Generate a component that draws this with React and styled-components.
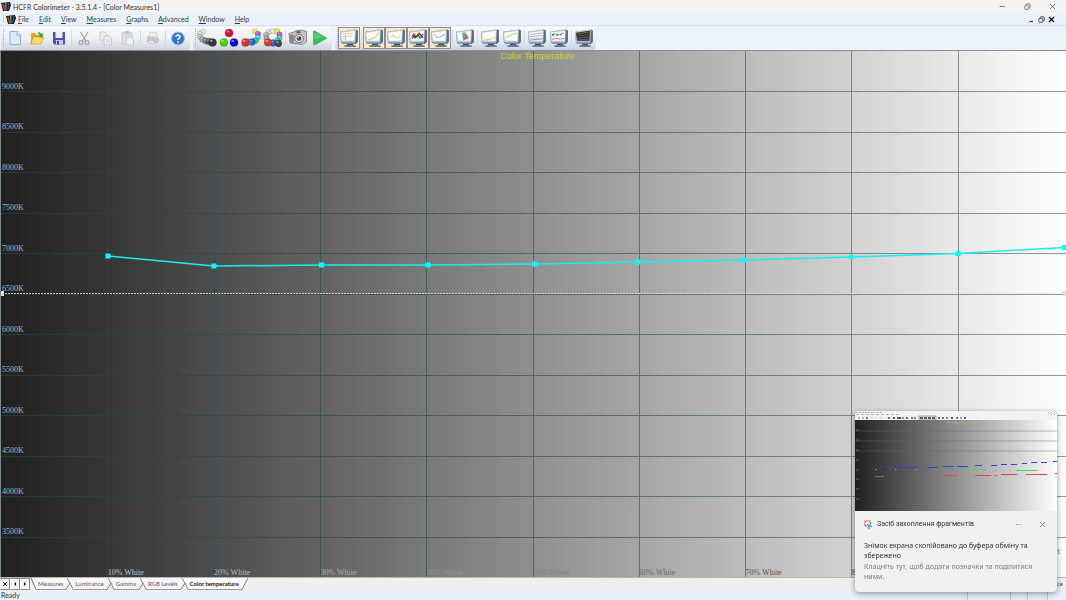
import React from "react";
import styled, { createGlobalStyle, css } from "styled-components";

const GlobalStyle = createGlobalStyle`
  *, *::before, *::after { box-sizing: border-box; }
  body { margin: 0; background: #edf2fa; }
  button { font: inherit; color: inherit; border: 0; padding: 0; background: none; }
`;

const Window = styled.div`
  display: flex;
  flex-direction: column;
  min-height: 100vh;
  font-family: Lato, "Noto Sans", sans-serif;
  font-size: 7px;
  color: #444;
`;

const TitleBar = styled.header`
  display: flex;
  align-items: center;
  height: 13px;
  padding: 0 10px 0 1px;
  gap: 2px;
  background: #f3f3f3;
`;

const Title = styled.h1`
  margin: 0;
  flex: 1;
  font-size: 7px;
  font-weight: 400;
  line-height: 12px;
  color: #333;
`;

const WindowButtons = styled.div`
  display: flex;
  align-items: center;
  gap: ${(p) => (p.$compact ? "3px" : "18px")};
`;

const GlyphButton = styled.button`
  display: flex;
  svg { display: block; }
`;

const MenuBar = styled.nav`
  display: flex;
  align-items: center;
  height: 13px;
  padding: 0 11px 0 3px;
  gap: 2px;
  background: #eaf1fa;
  border-bottom: 1px solid #dddfe3;
`;

const MenuList = styled.div`
  display: flex;
  flex: 1;
  gap: 10px;
`;

const MenuItem = styled.button`
  line-height: 12px;
  color: #333b44;
  &::first-letter { text-decoration: underline; }
`;

const Grip = styled.span`
  width: 1px;
  height: ${(p) => p.$height}px;
  flex: none;
  background: repeating-linear-gradient(#9cabc2 0 1px, transparent 1px 2px);
`;

const ToolbarBand = styled.div`
  display: flex;
  height: 25px;
  padding: 1px 0 0 1px;
  gap: 3px;
  background: #edf3fb;
  border-bottom: 1px solid #8e8e90;
`;

const Toolbar = styled.div`
  display: flex;
  align-items: center;
  padding: 0 1px 1px 2px;
  border-radius: 2px 3px 3px 2px;
  background: linear-gradient(#f9fafc 0%, #edf0f5 50%, #cdd4df 100%);
`;

const ToolButton = styled.button`
  display: grid;
  place-items: center;
  width: 22px;
  height: 22px;
  svg { display: block; }
  ${(p) =>
    p.$active &&
    css`
      background: #fce8c2;
      border: 1px solid #8e8aa2;
    `}
`;

const Divider = styled.span`
  width: 1px;
  height: 16px;
  margin: 0 1px;
  background: #d3d9e2;
`;

const ChartArea = styled.main`
  position: relative;
  flex: 1;
  min-height: 400px;
  overflow: hidden;
  background: linear-gradient(90deg, #202020, #ffffff);
  border-left: 1px solid #7d8a8a;
`;

const Plot = styled.svg`
  position: absolute;
  inset: 0;
  width: 100%;
  height: 100%;
`;

const ChartTitle = styled.h2`
  position: absolute;
  top: 0;
  left: 0;
  right: 0;
  margin: 0;
  padding-left: 8px;
  text-align: center;
  font: 400 9px/11px "Liberation Sans", sans-serif;
  color: #d3d513;
`;

const AxisLabel = styled.span`
  position: absolute;
  font: 8px/10px "Liberation Serif", serif;
  color: ${(p) => p.$tone};
  white-space: nowrap;
`;

const YLabel = styled(AxisLabel)`
  left: 1px;
  transform: translateY(-100%);
`;

const XLabel = styled(AxisLabel)`
  bottom: -1px;
`;

const EdgeNote = styled.span`
  position: absolute;
  right: 6px;
  bottom: 20px;
  font-size: 8px;
  line-height: 12px;
  color: #8d7a68;
`;

const TabStrip = styled.div`
  display: flex;
  align-items: stretch;
  height: 13px;
  border-top: 1px solid #b6b6b6;
  background: #f0efef;
  font-size: 6px;
  line-height: 12px;
  padding-right: 3px;
`;

const NavButton = styled.button`
  display: grid;
  place-items: center;
  width: 10px;
  border: 1px solid #8a8a8a;
  border-left-color: #fff;
  background: #f4f4f4;
`;

const Tab = styled.button`
  padding: 0 2px;
  color: ${(p) => (p.$active ? "#111" : "#5f555b")};
  font-weight: ${(p) => (p.$active ? 700 : 400)};
  background: ${(p) => (p.$active ? "#fff" : "#f7f5f6")};
  border-bottom: 1px solid #9a9a9a;
  white-space: nowrap;
`;

const TabEdge = styled.svg`
  flex: none;
  display: block;
`;

const StripNote = styled.span`
  margin-left: auto;
  color: #444;
`;

const StatusBar = styled.footer`
  display: flex;
  height: 10px;
  padding-left: 1px;
  line-height: 10px;
  background: #e9f0fa;
  color: #333;
`;

const StatusText = styled.span`
  flex: 1;
`;

const StatusPane = styled.span`
  width: ${(p) => p.$width}px;
  border-left: 1px solid #bccbe0;
`;

const Toast = styled.aside`
  position: fixed;
  right: 9px;
  bottom: 8px;
  width: 202px;
  border-radius: 4px;
  overflow: hidden;
  background: #f0f1f0;
  box-shadow: 0 0 1px #8a8a8a, 0 2px 6px rgba(0, 0, 0, 0.35);
  color: #333;
`;

const Thumbnail = styled.svg`
  display: block;
  width: 100%;
`;

const ToastHeader = styled.div`
  display: flex;
  align-items: center;
  gap: 4px;
  padding: 7px 11px 0 9px;
  font-family: Roboto, "Noto Sans", sans-serif;
  line-height: 12px;
`;

const ToastApp = styled.span`
  flex: 1;
`;

const ToastActions = styled.div`
  display: flex;
  align-items: center;
  gap: 16px;
`;

const ToastBody = styled.div`
  display: grid;
  gap: 1px;
  padding: 11px 9px 10px;
`;

const ToastText = styled.p`
  margin: 0;
  font-family: "Noto Sans", sans-serif;
  font-size: 7px;
  line-height: 10px;
  color: ${(p) => (p.$muted ? "#7b7b7b" : "#333")};
`;

const AppLogo = () => (
  <svg width="10" height="9" viewBox="0 0 10 9" aria-hidden="true">
    <path d="M0 1 9 0 10 3 8 9 2 9Z" fill="#15171a" />
    <path d="M1 2 3 1.500 4.500 8.500 3 8.500Z" fill="#df2630" />
    <path d="M4 1 5.500 1 5.500 8.500 4.500 8.500Z" fill="#2dd23a" />
    <path d="M7 1 8.500 1 7.500 8.500 6.500 8.500Z" fill="#3043df" />
  </svg>
);

const CloseIcon = ({ size = 7, color = "#555", weight = 0.8 }) => (
  <svg width={size} height={size} viewBox="0 0 7 7" aria-hidden="true">
    <path d="M1 1 6 6M6 1 1 6" stroke={color} strokeWidth={weight} fill="none" />
  </svg>
);
const MinIcon = ({ low, color = "#666" }) => (
  <svg width="7" height="7" viewBox="0 0 7 7" aria-hidden="true">
    <path d={low ? "M1.500 5.500H5" : "M0.500 3.500H6"} stroke={color} strokeWidth={low ? 1.2 : 0.8} />
  </svg>
);
const RestoreIcon = ({ color = "#666" }) => (
  <svg width="7" height="7" viewBox="0 0 7 7" fill="none" stroke={color} strokeWidth="0.8" aria-hidden="true">
    <path d="M2.300 2.200V1.500Q2.300 .8 3 .8H5.500Q6.200 .8 6.200 1.500V4Q6.200 4.700 5.500 4.700H4.900" />
    <rect x="0.800" y="2.300" width="4" height="4" rx="0.600" />
  </svg>
);

const Icon = ({ children, w = 20, h = 20 }) => (
  <svg width={w} height={h} viewBox={`0 0 ${w} ${h}`} aria-hidden="true">
    {children}
  </svg>
);

const Balls = ({ items }) => (
  <Icon>
    {items.map(([x, y, r, fill], i) => (
      <g key={i}>
        <circle cx={x} cy={y} r={r} fill={fill} stroke="rgba(0,0,0,.35)" strokeWidth="0.400" />
        <ellipse cx={x - r * 0.3} cy={y - r * 0.4} rx={r * 0.4} ry={r * 0.25} fill="#fff" opacity="0.450" />
      </g>
    ))}
  </Icon>
);

const NewIcon = () => (
  <Icon>
    <path d="M5 3.500H12L15.500 7V16.500H5Z" fill="#d9e8fd" stroke="#8daede" />
    <path d="M12 3.500V7H15.500" fill="#fff" stroke="#8daede" />
  </Icon>
);
const OpenIcon = () => (
  <Icon>
    <path d="M4 5H8L9 6.500H14V15H4Z" fill="#e2a927" />
    <path d="M3.500 16 6.500 9H17L13.500 16Z" fill="#ffdf61" stroke="#bd8617" strokeWidth="0.600" />
    <path d="M10 5Q13 3 14.500 6L16.500 5.500 15 10 11.500 7.500 13 7Q12 5 10 5Z" fill="#28a334" />
  </Icon>
);
const SaveIcon = () => (
  <Icon>
    <path d="M4 4H16V16.500H5.500L4 15Z" fill="#5352b4" />
    <rect x="6.500" y="4" width="7" height="6" fill="#edf0fb" />
    <rect x="7" y="12" width="7" height="4.500" fill="#c4c8e2" />
    <rect x="8" y="13" width="2" height="3.500" fill="#4241a0" />
  </Icon>
);
const CutIcon = () => (
  <Icon>
    <g fill="none" stroke="#a4a7ab" strokeWidth="1.300">
      <path d="M6.500 4 12 13M14 4 8.500 13" />
      <circle cx="7" cy="14.500" r="1.900" />
      <circle cx="13" cy="14.500" r="1.900" />
    </g>
  </Icon>
);
const CopyIcon = () => (
  <Icon>
    <g fill="#eceef0" stroke="#c1c4c8" strokeWidth="0.900">
      <path d="M4 4H9L11 6V12H4Z" />
      <path d="M8 8H13L15.500 10.500V17H8Z" />
      <path d="M10 12H14M10 14H14" />
    </g>
  </Icon>
);
const PasteIcon = () => (
  <Icon>
    <rect x="4" y="4.500" width="10" height="12" rx="1" fill="#dcdee0" stroke="#c8cbcf" />
    <rect x="7" y="3" width="4" height="3" fill="#c3c6ca" />
    <path d="M8.500 9H13L15.500 11.500V17H8.500Z" fill="#f0f1f2" stroke="#c6c9cd" />
  </Icon>
);
const PrintIcon = () => (
  <Icon>
    <path d="M7.500 4 14 5 13 10 6 9Z" fill="#eff0f1" stroke="#c3c6ca" strokeWidth="0.800" />
    <path d="M4 9 6 8 15 9.500 16 11V14L13 16 4 13.500Z" fill="#c3c6ca" />
    <path d="M6 12 12 13.500 10 16 5 14Z" fill="#eff0f1" stroke="#abaeb2" strokeWidth="0.600" />
  </Icon>
);
const HelpIcon = () => (
  <Icon>
    <circle cx="10" cy="10.500" r="6.500" fill="#3972cc" stroke="#a5bfe8" />
    <path d="M8 8.800Q8 7 10 7T12 8.800Q12 10 10.100 11V12M10.100 13.200V14.700" fill="none" stroke="#fff" strokeWidth="1.500" />
  </Icon>
);
const CameraIcon = () => (
  <Icon>
    <path d="M1 5.500 6 4 8 2.500 14 2 18.500 3.500V14L14 16.500 2 15Z" fill="#c4c4c2" stroke="#6a6a6a" strokeWidth="0.700" />
    <path d="M2 6.500 6 7V15L2 14.500Z" fill="#8a8a89" />
    <circle cx="11" cy="10.500" r="4.300" fill="#dedede" stroke="#5a5a5a" strokeWidth="0.800" />
    <circle cx="11" cy="10.500" r="2.300" fill="#354656" />
    <circle cx="10.300" cy="9.800" r="0.800" fill="#c7dced" />
    <rect x="8.500" y="3.300" width="4" height="1.500" fill="#454545" />
  </Icon>
);
const PlayIcon = () => (
  <Icon>
    <path d="M3.500 3.500Q3.500 2.500 4.500 3L16 9.500Q17 10 16 10.700L4.500 17Q3.500 17.500 3.500 16.500Z" fill="#35bd55" stroke="#36a552" strokeWidth="0.600" />
    <path d="M4.500 4.500 13.500 9.700 4.500 11Z" fill="#5fd076" />
  </Icon>
);

const Monitor = ({ dark, children }) => (
  <Icon>
    <path d="M1 3.800 16.800 1.500 18.800 2.500V14L16.300 16.200 3 15.800 1.800 14.800Z" fill="#7c94aa" />
    <path d="M16.800 1.500 18.800 2.500V14L16.300 16.200 16 14.500Z" fill="#566f88" />
    <path d="M1 3.800 16.800 1.500 16.200 14.300 2.200 14.300Z" fill="#b4c4d3" />
    <path d="M2 4.800 15.900 2.800 15.400 12.800 3 12.800Z" fill={dark ? "#262b2a" : "#fdfdfb"} />
    <path d="M8 15.800H14V17.500H8Z" fill="#3f4d5b" />
    <path d="M4.500 17.800 7.500 17H15L17.500 18.200 16 19H6Z" fill="#6d7d8f" />
    <g fill="none" strokeWidth="0.900">{children}</g>
  </Icon>
);

const GREY_BALLS = [[6,3.500,2.600,"#e4e4e4"],[3,5.500,2.700,"#d5d5d5"],[3,9,2.700,"#bdbdbd"],[5.500,11.500,2.900,"#a0a0a0"],[9,13,3.200,"#7d7d7d"],[12,13.500,3.300,"#5a5a5a"],[15.500,14.500,4,"#383838"]];
const RGB_BALLS = [[10,5,4,"#e00d35"],[5,14.500,4,"#48d600"],[15,14.500,4,"#1208d8"]];
const COLOR_BALLS = [[14,3.500,2.600,"#f1e23c"],[17,6,2.700,"#c34ae0"],[17,9.500,2.700,"#45d8e4"],[14.500,12.500,3.100,"#3ac867"],[11,14,3.400,"#245fd9"],[7.500,14,3.100,"#3a9be0"],[4.500,14.500,4,"#df2f25"]];
const RING_BALLS = [[6,4,2.800,"#d2d2d2"],[10,3,2.600,"#e5e5e5"],[14,3.500,2.800,"#e8e23b"],[16.500,6.500,2.700,"#c44cdb"],[3,7,2.700,"#b0b0b0"],[3.500,10.500,2.800,"#999"],[16.500,10,2.800,"#37cfd7"],[14.500,13,3,"#3ac555"],[10,15,3.400,"#2761c9"],[5,14.500,3.800,"#df3a2a"],[15.500,15.500,3.400,"#484848"]];

const Tool = ({ label, active, children }) => (
  <ToolButton type="button" aria-label={label} $active={active}>{children}</ToolButton>
);

const MENUS = ["File", "Edit", "View", "Measures", "Graphs", "Advanced", "Window", "Help"];
const TABS = ["Measures", "Luminance", "Gamma", "RGB Levels", "Color temperature"];

const PLOT_W = 1065;
const PLOT_H = 526;
const KELVIN = [9000, 8500, 8000, 7500, 7000, 6500, 6000, 5500, 5000, 4500, 4000, 3500];
const kelvinY = (i) => 40.5 + i * 40.5;
const levelX = (i) => 0.5 + i * 106.3;
const LEVELS = [10, 20, 30, 40, 50, 60, 70, 80, 90];
const LEVEL_TONES = ["#c4c4c4", "#b9b9b9", "#acacac", "#949494", "#808080", "#686868", "#555", "#444"];
const POINTS = [[107,205],[213,215],[320.500,214],[427,214],[534,213],[637,211],[743,209],[850.500,206],[957,202.500],[1063.500,196.500]];

function TemperatureChart() {
  return (
    <ChartArea>
      <Plot viewBox={`0 0 ${PLOT_W} ${PLOT_H}`} preserveAspectRatio="none" role="img" aria-label="Color temperature by grey level">
        <defs>
          <linearGradient id="gridTone" gradientUnits="userSpaceOnUse" x1="0" x2={PLOT_W} y1="0" y2="0">
            <stop offset="0" stopColor="#1d3c3c" />
            <stop offset="0.5" stopColor="#4b6562" />
            <stop offset="1" stopColor="#949b9b" />
          </linearGradient>
        </defs>
        {KELVIN.map((k, i) => (
          <rect key={k} x="0" y={Math.round(kelvinY(i) - 0.500)} width={PLOT_W} height="1" fill="url(#gridTone)" />
        ))}
        {LEVELS.map((level, i) => (
          <rect key={level} x={Math.round(levelX(i + 1) - 0.500)} y="0" width="1" height={PLOT_H} fill="url(#gridTone)" />
        ))}
        <path d={`M1 242.500H${PLOT_W}`} stroke="#e4e4e4" strokeOpacity="0.850" strokeWidth="1" strokeDasharray="2 1" />
        <rect x="0" y="240" width="3" height="5" fill="#e2e2e2" />
        <rect x="1062" y="240" width="3" height="5" fill="#dedede" />
        <polyline points={POINTS.map((p) => p.join(",")).join(" ")} fill="none" stroke="#18eef0" strokeWidth="1.500" />
        {POINTS.map(([x, y]) => (
          <rect key={x} x={x - 2.500} y={y - 2.500} width="5" height="5" fill="#00ffff" />
        ))}
      </Plot>
      <ChartTitle>Color Temperature</ChartTitle>
      {KELVIN.map((k, i) => (
        <YLabel key={k} $tone="#b4b4b4" style={{ top: `${(kelvinY(i) / PLOT_H) * 100}%` }}>{k}K</YLabel>
      ))}
      {LEVEL_TONES.map((tone, i) => (
        <XLabel key={i} $tone={tone} style={{ left: `${(levelX(i + 1) / PLOT_W) * 100}%` }}>{LEVELS[i]}% White</XLabel>
      ))}
      <EdgeNote>t</EdgeNote>
    </ChartArea>
  );
}

const THUMB_ICONS = [[3,"#9ab6e0"],[7,"#e8b629"],[11,"#6a6ac0"],[16,"#ddd"],[20,"#ddd"],[25,"#ddd"],[33,"#4380d3"],[38,"#555"],[42,"#c2353f"],[44,"#3547c9"],[47,"#5eae64"],[51,"#7b4fae"],[56,"#777"],[59,"#35bd55"],[83,"#54697c"],[87,"#7183a1"],[91,"#71899c"],[96,"#53685c"],[101,"#65798f"],[105,"#93a3b3"],[109,"#8b4a98"]];

function SnipThumbnail() {
  return (
    <Thumbnail viewBox="0 0 202 100" role="img" aria-label="Screenshot preview">
      <defs>
        <linearGradient id="thumbRamp">
          <stop offset="0" stopColor="#202020" />
          <stop offset="1" stopColor="#fff" />
        </linearGradient>
      </defs>
      <rect width="202" height="10" fill="#f1f3f7" />
      <path d="M1 1.500H27" stroke="#9b9b9b" strokeWidth="0.700" strokeDasharray="2 1" />
      <path d="M1 3.500H46" stroke="#9aa6b3" strokeWidth="0.800" strokeDasharray="3 2" />
      <path d="M193 1.500H201M196 3.500H201" stroke="#999" strokeWidth="0.700" strokeDasharray="1 2" />
      <rect x="64" y="5" width="17" height="4" fill="#f6dfb5" stroke="#55529a" strokeWidth="0.500" />
      {[65, 69, 73, 77].map((x) => <rect key={x} x={x} y="6" width="3" height="2" fill="#4c6178" />)}
      {THUMB_ICONS.map(([x, c]) => <rect key={x} x={x} y="6" width="2" height="2" fill={c} />)}
      <rect y="9" width="202" height="91" fill="url(#thumbRamp)" />
      <path d="M0 20H202M0 30H202M0 40H202" stroke="#56706c" strokeOpacity="0.450" />
      <path d="M92 11.500H114" stroke="#b9ba32" strokeWidth="0.800" strokeDasharray="3 1" />
      <path d="M1 19H4M1 29H4M1 39H4M1 49H4M1 59H4M1 68H4M1 78H4M1 88H4" stroke="#718080" strokeWidth="0.800" />
      <g fill="none" strokeWidth="1">
        <path d="M20 54.500H22M25 55.500H27M30 55.500H32M35 56.500H62M72 56.500H83M88 55.500H99M102 55.500H113M120 54.500H127M136 54.500H142M146 53.500H152M156 53.500H162M167 52.500H172M176 51.500H182M186 51.500H192M198 50.500H202" stroke="#3b3bd5" />
        <path d="M20 58.500H21.500M40 58.500H41.500M60 58.500H61.500M80 58.500H82M100 58.500H102M111 58.500H131M140 59.500H142M161 59.500H182" stroke="#45dc45" />
        <path d="M20 65.500H29M40 64.500H41.500M60 65.500H61.500M80 65.500H82M88 64.500H102M120 64.500H136M140 64.500H142M146 63.500H162M171 63.500H192M200 62.500H202" stroke="#e84343" />
      </g>
    </Thumbnail>
  );
}

const NAV = [
  ["Close", "M1 1 5 5M5 1 1 5"],
  ["Previous", "M4 1 2 3 4 5Z"],
  ["Next", "M2 1 4 3 2 5Z"],
];

export default function App() {
  return (
    <Window>
      <GlobalStyle />
      <TitleBar>
        <AppLogo />
        <Title>HCFR Colorimeter - 3.5.1.4 - [Color Measures1]</Title>
        <WindowButtons>
          <GlyphButton type="button" aria-label="Minimize"><MinIcon /></GlyphButton>
          <GlyphButton type="button" aria-label="Restore"><RestoreIcon /></GlyphButton>
          <GlyphButton type="button" aria-label="Close"><CloseIcon /></GlyphButton>
        </WindowButtons>
      </TitleBar>
      <MenuBar>
        <Grip $height={8} />
        <AppLogo />
        <MenuList>
          {MENUS.map((m) => <MenuItem key={m} type="button">{m}</MenuItem>)}
        </MenuList>
        <WindowButtons $compact>
          <GlyphButton type="button" aria-label="Minimize document"><MinIcon low color="#333" /></GlyphButton>
          <GlyphButton type="button" aria-label="Restore document"><RestoreIcon color="#333" /></GlyphButton>
          <GlyphButton type="button" aria-label="Close document"><CloseIcon color="#111" weight={1.3} /></GlyphButton>
        </WindowButtons>
      </MenuBar>
      <ToolbarBand>
        <Toolbar>
          <Grip $height={18} />
          <Tool label="New"><NewIcon /></Tool>
          <Tool label="Open"><OpenIcon /></Tool>
          <Tool label="Save"><SaveIcon /></Tool>
          <Divider />
          <Tool label="Cut"><CutIcon /></Tool>
          <Tool label="Copy"><CopyIcon /></Tool>
          <Tool label="Paste"><PasteIcon /></Tool>
          <Divider />
          <Tool label="Print"><PrintIcon /></Tool>
          <Divider />
          <Tool label="Help"><HelpIcon /></Tool>
        </Toolbar>
        <Toolbar>
          <Grip $height={18} />
          <Tool label="Measure grey scale"><Balls items={GREY_BALLS} /></Tool>
          <Tool label="Measure primaries"><Balls items={RGB_BALLS} /></Tool>
          <Tool label="Measure saturations"><Balls items={COLOR_BALLS} /></Tool>
          <Tool label="Measure all"><Balls items={RING_BALLS} /></Tool>
          <Divider />
          <Tool label="Capture"><CameraIcon /></Tool>
          <Tool label="Run"><PlayIcon /></Tool>
        </Toolbar>
        <Toolbar>
          <Grip $height={18} />
          <Tool label="Measures view" active><Monitor><path d="M3.500 6.500 14 5M4 9 13 8M6.500 6V12M4 11H7" stroke="#e3c493" /></Monitor></Tool>
          <Divider />
          <Tool label="Luminance" active><Monitor><path d="M4 12Q11 11 15 4.500" stroke="#c5c533" /></Monitor></Tool>
          <Tool label="Gamma" active><Monitor><path d="M5 9Q7 6.500 9.500 9T14.500 7.500" stroke="#d1cb37" /></Monitor></Tool>
          <Tool label="RGB levels" active><Monitor><path d="M4 9 6 6 8 9 11 5 13 8 15 6" stroke="#d92b31" strokeWidth="1.300" /><path d="M4 7 7 10 10 7 12 10 15 8" stroke="#238a39" strokeWidth="1.300" /><path d="M4 11 6 8 9 9 12 6 15 10" stroke="#242936" /></Monitor></Tool>
          <Tool label="Color temperature" active><Monitor><path d="M3.500 6Q6 10 8.500 9.500T15 6" stroke="#9b91d1" /></Monitor></Tool>
          <Divider />
          <Tool label="CIE diagram"><Monitor><path d="M7 4.500 10 4.500 9.500 9Z" fill="#27d553" /><path d="M10 4.500 14 10 9.500 9Z" fill="#ef453a" /><path d="M7 4.500 9.500 9 8 12.500Z" fill="#35b5e8" /><path d="M8 12.500 9.500 9 14 10Z" fill="#8b4bea" /></Monitor></Tool>
          <Divider />
          <Tool label="Near black"><Monitor><path d="M3.500 12Q10 12 15 9.500" stroke="#d3ce4e" /></Monitor></Tool>
          <Tool label="Near white"><Monitor><path d="M3.500 9.500Q9 6.500 15 5" stroke="#d3ce4e" /></Monitor></Tool>
          <Divider />
          <Tool label="Saturation luminance"><Monitor><path d="M3 6.500 15.500 5" stroke="#e994a3" /><path d="M3 8.500 15.500 7.500" stroke="#5ac7dc" /><path d="M3 10.300H15.500" stroke="#9fd88d" /><path d="M3 12 15 11" stroke="#c66bd9" /></Monitor></Tool>
          <Tool label="Saturation shift"><Monitor><path d="M3 6.500 7 6 10 7 15 5" stroke="#333" strokeDasharray="3 1" /><path d="M3 8 15 6.500" stroke="#40b653" strokeDasharray="2 2" /><path d="M3 11.500 7 10 10 11 15 10.500" stroke="#e349c8" /></Monitor></Tool>
          <Divider />
          <Tool label="Spectrum"><Monitor dark><path d="M3 6 15 4" stroke="#777d39" /><path d="M3 8 15 6.500" stroke="#9b4337" /><path d="M3 10 15 9" stroke="#3d855c" /><path d="M3 12 15 11" stroke="#bd37b7" /></Monitor></Tool>
        </Toolbar>
      </ToolbarBand>
      <TemperatureChart />
      <TabStrip>
        {NAV.map(([label, d]) => (
          <NavButton key={label} type="button" aria-label={label}>
            <svg width="6" height="6" viewBox="0 0 6 6" aria-hidden="true">
              <path d={d} fill={label === "Close" ? "none" : "#111"} stroke="#222" strokeWidth={label === "Close" ? 1 : 0} />
            </svg>
          </NavButton>
        ))}
        <TabEdge width="6" height="12" viewBox="0 0 6 12" aria-hidden="true">
          <path d="M1 0 6 11.500V0Z" fill="#f7f5f6" />
          <path d="M1 0 6 11.500" stroke="#777" fill="none" />
        </TabEdge>
        {TABS.map((t, i) => {
          const active = i === TABS.length - 1;
          return (
            <React.Fragment key={t}>
              <Tab type="button" $active={active}>{t}</Tab>
              <TabEdge width="8" height="12" viewBox="0 0 8 12" aria-hidden="true">
                <path d="M0 0H7L1 11.500H0Z" fill={active ? "#fff" : "#f7f5f6"} />
                {!active && <path d="M2 0 8 11.500V0Z" fill={i === TABS.length - 2 ? "#fff" : "#f7f5f6"} />}
                <path d={active ? "M7 0 1 11.500H0" : "M2 0 5 5 1 11.500H0M5 5 8 11.500"} stroke="#777" strokeWidth="0.900" fill="none" />
              </TabEdge>
            </React.Fragment>
          );
        })}
        <StripNote>Reference</StripNote>
      </TabStrip>
      <StatusBar>
        <StatusText>Ready</StatusText>
        <StatusPane $width={43} />
        <StatusPane $width={17} />
        <StatusPane $width={20} />
        <StatusPane $width={19} />
      </StatusBar>
      <Toast role="status">
        <SnipThumbnail />
        <ToastHeader>
          <svg width="9" height="9" viewBox="0 0 9 9" fill="none" aria-hidden="true">
            <path d="M3 6H1V1H6V3" stroke="#e04a3f" strokeWidth="1.200" strokeDasharray="2 0.600" />
            <path d="M7 2.500 4.500 7M3 4.500 8 6.500" stroke="#2688cf" />
            <circle cx="5" cy="7.500" r="1" stroke="#2688cf" strokeWidth="0.800" />
          </svg>
          <ToastApp>Засіб захоплення фрагментів</ToastApp>
          <ToastActions>
            <GlyphButton type="button" aria-label="More options">
              <svg width="8" height="7" viewBox="0 0 8 7" fill="#777" aria-hidden="true">
                <circle cx="1.300" cy="3.500" r="0.600" /><circle cx="4" cy="3.500" r="0.600" /><circle cx="6.700" cy="3.500" r="0.600" />
              </svg>
            </GlyphButton>
            <GlyphButton type="button" aria-label="Dismiss"><CloseIcon color="#777" /></GlyphButton>
          </ToastActions>
        </ToastHeader>
        <ToastBody>
          <ToastText>Знімок екрана скопійовано до буфера обміну та збережено</ToastText>
          <ToastText $muted>Клацніть тут, щоб додати позначки та поділитися ними.</ToastText>
        </ToastBody>
      </Toast>
    </Window>
  );
}
